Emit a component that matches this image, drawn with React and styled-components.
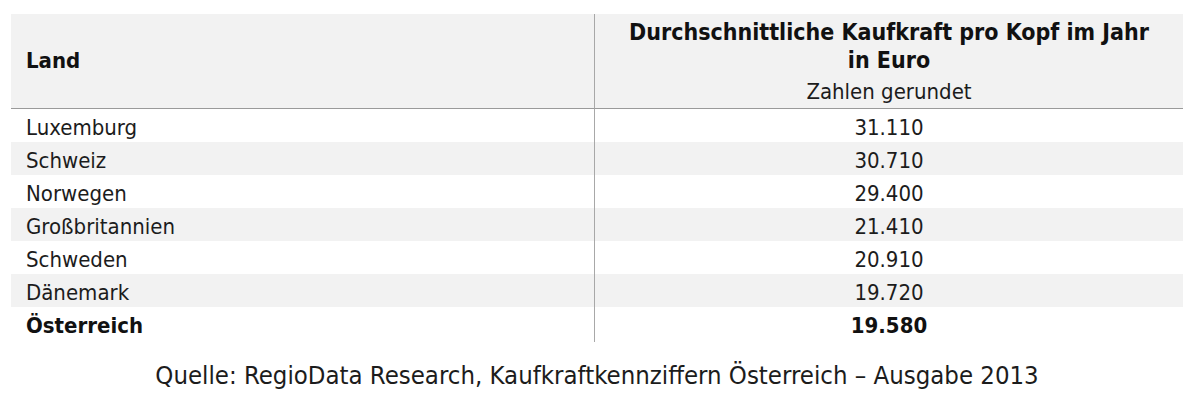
import React from "react";
import styled, { createGlobalStyle } from "styled-components";

const Global = createGlobalStyle`
  html, body { margin: 0; padding: 0; background: #ffffff; }
  body { font-family: "DejaVu Sans Condensed", "DejaVu Sans", sans-serif; color: #1c1c1c; }
`;

const Page = styled.div`
  width: 1200px;
  height: 408px;
  padding: 14px 0 0 11px;
  box-sizing: border-box;
`;

const Table = styled.div`
  width: 1172px;
  display: grid;
  grid-template-columns: 583px 589px;
`;

const HeadCell = styled.div`
  background: #f2f2f2;
  height: 95px;
  box-sizing: border-box;
  border-bottom: 1px solid #9a9a9a;
  display: flex;
  flex-direction: column;
  justify-content: ${(p) => (p.$center ? "flex-start" : "center")};
  align-items: ${(p) => (p.$center ? "center" : "flex-start")};
  padding: ${(p) => (p.$center ? "4px 0 0 0" : "0 0 0 15px")};
  border-left: ${(p) => (p.$center ? "1px solid #a8a8a8" : "none")};
`;

const HeadTitle = styled.div`
  font-weight: bold;
  font-size: ${(p) => (p.$large ? "23px" : "22px")};
  line-height: 28px;
  color: #111;
  text-align: center;
`;

const HeadSub = styled.div`
  font-size: 22px;
  line-height: 32px;
  margin-top: 2px;
  color: #1c1c1c;
`;

const Cell = styled.div`
  height: 33px;
  box-sizing: border-box;
  padding: 4px ${(p) => (p.$center ? "0" : "15px")} 0;
  font-size: 22px;
  line-height: 29px;
  font-weight: ${(p) => (p.$bold ? "bold" : "normal")};
  color: ${(p) => (p.$bold ? "#111" : "#1c1c1c")};
  background: ${(p) => (p.$striped ? "#f2f2f2" : "#ffffff")};
  text-align: ${(p) => (p.$center ? "center" : "left")};
  border-left: ${(p) => (p.$center ? "1px solid #a8a8a8" : "none")};
`;

const Tail = styled.div`
  height: 2px;
  border-left: ${(p) => (p.$center ? "1px solid #a8a8a8" : "none")};
`;

const Source = styled.div`
  width: 1172px;
  margin-top: 18px;
  text-align: center;
  font-size: 25.5px;
  line-height: 30px;
  color: #1c1c1c;
`;

const rows = [
  ["Luxemburg", "31.110"],
  ["Schweiz", "30.710"],
  ["Norwegen", "29.400"],
  ["Großbritannien", "21.410"],
  ["Schweden", "20.910"],
  ["Dänemark", "19.720"],
  ["Österreich", "19.580", true],
];

export default function App() {
  return (
    <>
      <Global />
      <Page>
        <Table>
          <HeadCell>
            <HeadTitle>Land</HeadTitle>
          </HeadCell>
          <HeadCell $center>
            <HeadTitle $large>
              Durchschnittliche Kaufkraft pro Kopf im Jahr
              <br />
              in Euro
            </HeadTitle>
            <HeadSub>Zahlen gerundet</HeadSub>
          </HeadCell>
          {rows.map(([land, value, bold], i) => (
            <React.Fragment key={land}>
              <Cell $striped={i % 2 === 1} $bold={bold}>
                {land}
              </Cell>
              <Cell $striped={i % 2 === 1} $bold={bold} $center>
                {value}
              </Cell>
            </React.Fragment>
          ))}
          <Tail />
          <Tail $center />
        </Table>
        <Source>
          Quelle: RegioData Research, Kaufkraftkennziffern Österreich – Ausgabe 2013
        </Source>
      </Page>
    </>
  );
}
